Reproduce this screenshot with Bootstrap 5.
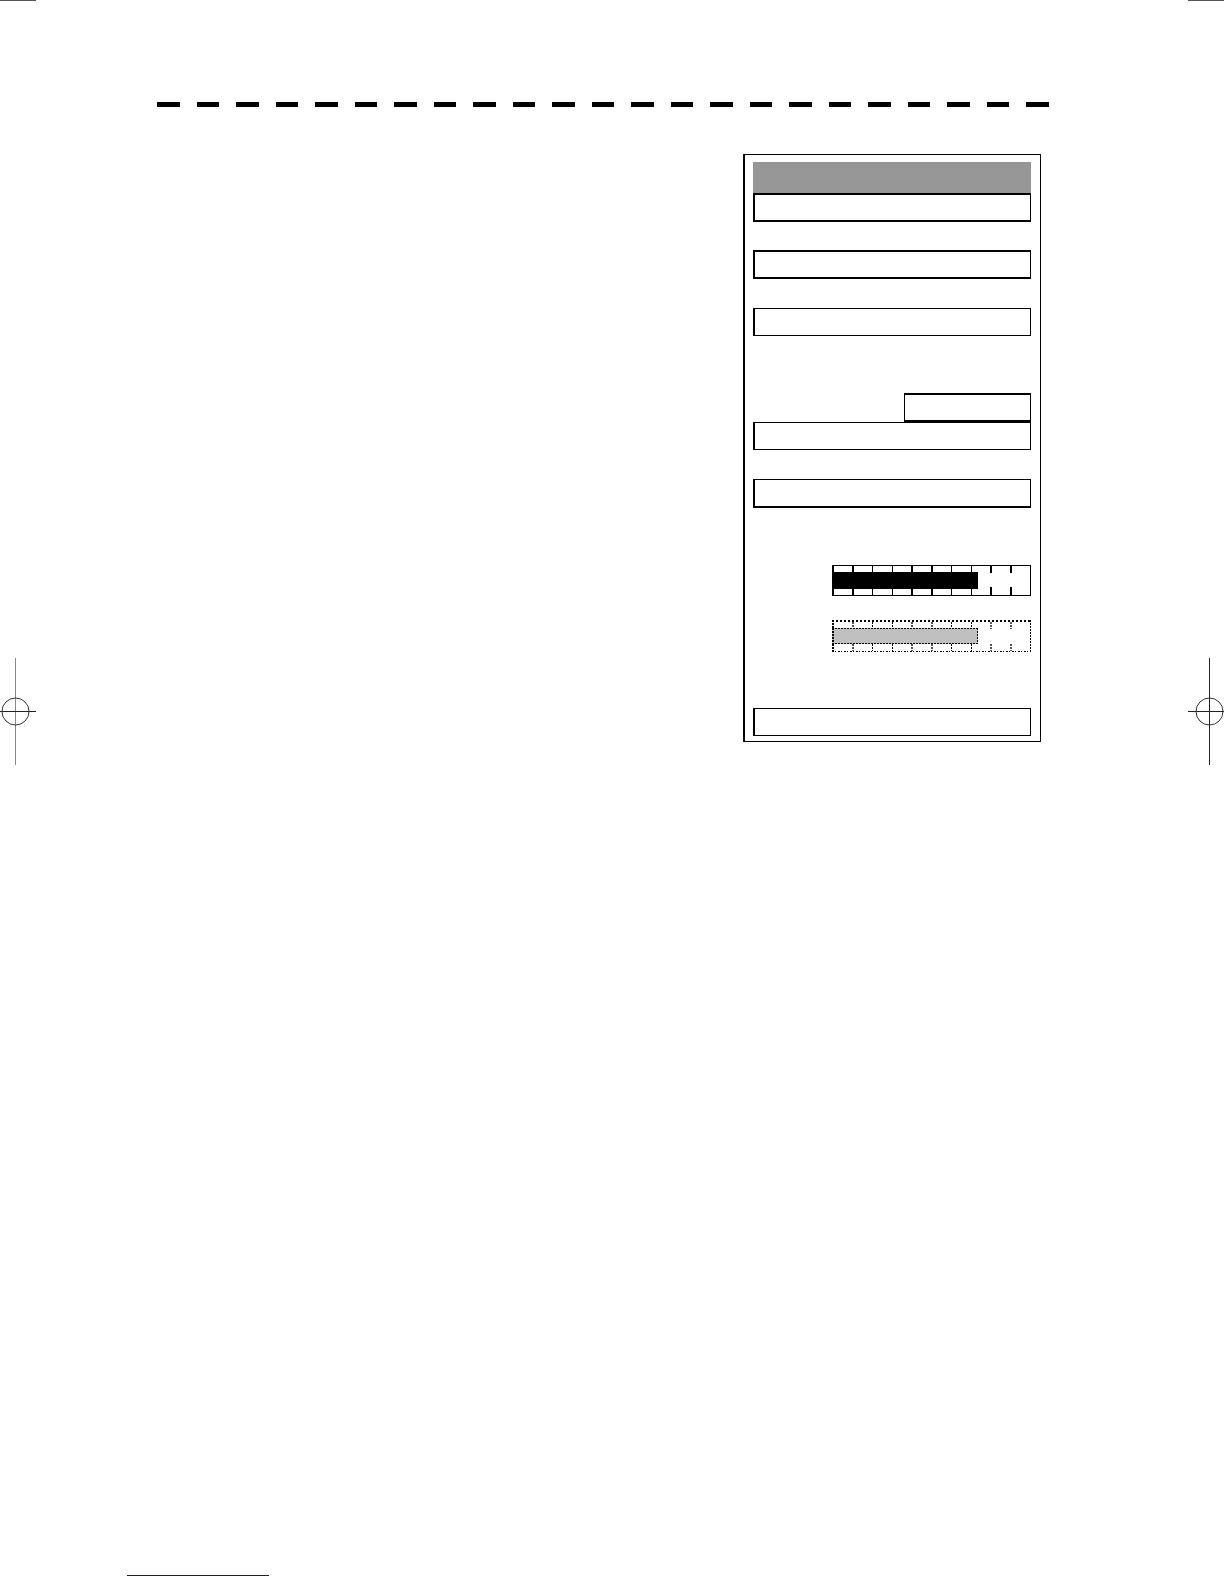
<!DOCTYPE html>
<html lang="en">
<head>
<meta charset="utf-8">
<meta name="viewport" content="width=device-width, initial-scale=1">
<title>Settings form</title>
<link href="https://cdn.jsdelivr.net/npm/bootstrap@5.3.0/dist/css/bootstrap.min.css" rel="stylesheet">
<style>
body { font-family: "Liberation Sans", Arial, sans-serif; background: #fff; color: #000; }
svg { display: block; flex: none; }
.corner { width: 36px; height: 1px; background: #555; }
.rail { width: 36px; padding-top: 657px; flex: none; }
.sheet { padding: 101px 139px 0 121px; min-width: 0; }
.dashes { height: 5px; width: 100%; }
.panel { width: 298px; margin-top: 47px; padding: 7px 9px 5px 8px; border: 1px solid #000; border-left-width: 2px; }
.titlebar { height: 31px; background: #969696; }
.field { height: 28px; padding: 0 6px; font-size: 14px; color: #000; background: #fff; border: 1px solid #000; border-left-width: 2px; border-radius: 0; }
.field-heavy { height: 29px; border-top-width: 2px; border-bottom-width: 2px; }
.field-base { height: 29px; border-bottom-width: 2px; }
.field-short { width: 127px; border-left-width: 1px; }
.space-near { margin-top: 28px; }
.space-row { margin-top: 29px; }
.space-group { margin-top: 57px; }
.space-gauge { margin-top: 24px; }
.space-last { margin-top: 56px; }
.foot { padding: 0 127px 8px; }
.foot-link { width: 142px; height: 14px; border-bottom: 1px solid #10109a; }
</style>
<script src="https://cdn.jsdelivr.net/npm/bootstrap@5.3.0/dist/js/bootstrap.bundle.min.js"></script>
</head>
<body class="d-flex flex-column min-vh-100">
<header class="d-flex justify-content-between">
  <div class="corner"></div>
  <div class="corner"></div>
</header>

<div class="d-flex flex-grow-1">
  <div class="rail">
    <svg width="36" height="107" viewBox="0 0 36 107" fill="none" aria-hidden="true">
      <path d="M15.5 0V107" stroke="#888"/>
      <path d="M0 53.5H36" stroke="#222"/>
      <circle cx="15.5" cy="53.5" r="13.5" stroke="#333"/>
    </svg>
  </div>

  <main class="sheet flex-grow-1">
    <svg class="dashes" aria-hidden="true">
      <line x1="0" y1="2.5" x2="100%" y2="2.5" stroke="#000" stroke-width="5" stroke-dasharray="22.5 17" shape-rendering="crispEdges"/>
    </svg>

    <form class="panel d-flex flex-column ms-auto me-2">
      <div class="titlebar"></div>
      <input class="form-control field field-heavy" type="text" aria-label="Field 1">
      <input class="form-control field field-heavy space-near" type="text" aria-label="Field 2">
      <input class="form-control field space-row" type="text" aria-label="Field 3">
      <input class="form-control field field-heavy field-short space-group ms-auto" type="text" aria-label="Field 4">
      <input class="form-control field" type="text" aria-label="Field 5">
      <input class="form-control field field-base space-row" type="text" aria-label="Field 6">

      <svg class="space-group ms-auto" width="199" height="31" viewBox="0 0 199 31" shape-rendering="crispEdges" role="img" aria-label="Gauge">
        <path d="M0 0H199V31H0ZM2 1V30H198V1Z" fill-rule="evenodd"/>
        <path d="M20 0h2v8h-2zM40 0h1v8h-1zM60 0h1v8h-1zM79 0h2v8h-2zM99 0h2v8h-2zM119 0h1v8h-1zM139 0h1v8h-1zM158 0h2v8h-2zM178 0h2v8h-2z"/>
        <path d="M20 22h2v9h-2zM40 22h1v9h-1zM60 22h1v9h-1zM79 22h2v9h-2zM99 22h2v9h-2zM119 22h1v9h-1zM139 22h1v9h-1zM158 22h2v9h-2zM178 22h2v9h-2z"/>
        <rect y="7" width="146" height="17"/>
      </svg>

      <svg class="space-gauge ms-auto" width="199" height="32" viewBox="0 0 199 32" fill="none" stroke="#000" shape-rendering="crispEdges" role="img" aria-label="Inactive gauge">
        <path d="M0 1H199" stroke-width="2" stroke-dasharray="2 2"/>
        <path d="M0 31.5H199" stroke-dasharray="2 1 1 2"/>
        <path d="M1 0V32" stroke-width="2" stroke-dasharray="2 1"/>
        <path d="M198.5 0V32" stroke-dasharray="2 1"/>
        <path d="M40.5 2V9M60.5 2V9M119.5 2V9M139.5 2V9M40.5 24V31M60.5 24V31M119.5 24V31M139.5 24V31" stroke-dasharray="2 1"/>
        <path d="M21 2V9M80 2V9M100 2V9M159 2V9M179 2V9M21 24V31M80 24V31M100 24V31M159 24V31M179 24V31" stroke="#555" stroke-width="2" stroke-dasharray="2 1"/>
        <rect y="8" width="146" height="16" fill="#c0c0c0" stroke="none"/>
        <path d="M0 8.5H146M0 23.5H146" stroke-dasharray="2 1"/>
        <path d="M1 8V24" stroke-width="2" stroke-dasharray="2 1"/>
        <path d="M145.5 8V24" stroke-dasharray="2 1"/>
      </svg>

      <input class="form-control field space-last" type="text" aria-label="Field 7">
    </form>
  </main>

  <div class="rail">
    <svg width="36" height="107" viewBox="0 0 36 107" fill="none" aria-hidden="true">
      <path d="M21.5 0V107M0 53.5H36" stroke="#222"/>
      <circle cx="21.5" cy="53.5" r="13.5" stroke="#333"/>
    </svg>
  </div>
</div>

<footer class="foot">
  <a class="foot-link d-block" href="#" aria-label="Website"></a>
</footer>
</body>
</html>
